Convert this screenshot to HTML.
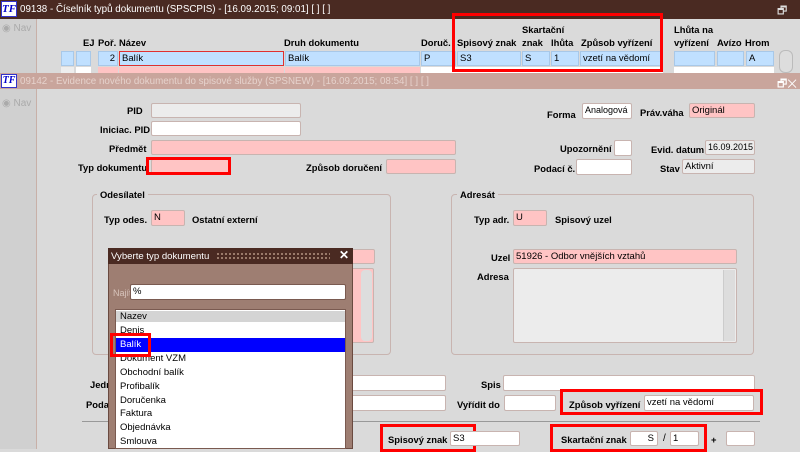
<!DOCTYPE html>
<html><head><meta charset="utf-8"><style>
*{margin:0;padding:0;box-sizing:border-box}
body{width:800px;height:449px;overflow:hidden;background:#dadada;font-family:"Liberation Sans",Arial,sans-serif;font-size:10px;color:#000;position:relative}
div,span{position:absolute}
.t{white-space:nowrap}
.b{font-weight:bold;font-size:9.4px}
.in{border:1px solid #c8b4b0;border-radius:2px;background:#fff;padding-left:2px;line-height:13px;white-space:nowrap;overflow:hidden;font-size:9.5px}
.pk{background:#ffc4c4}
.gr{background:#ececec}
.bl{background:#c0e0ff;border:1px solid #a8c8e8;padding-left:2px;line-height:13px;white-space:nowrap;font-size:9.5px}
.rb{border:3px solid #f00}
.fs{border:1px solid #c8b4b0;border-radius:4px}
</style></head><body>
<!-- top window -->
<div style="left:0;top:0;width:800px;height:19px;background:#4a2a22"></div>
<div style="left:1px;top:1px;width:16px;height:16px;background:#fff;border:1px solid #33c;color:#00c;font:bold italic 11px 'Liberation Serif';line-height:14px;text-align:center">TF</div>
<div class="t" style="left:20px;top:4px;color:#fff;font-size:9.8px">09138 - Číselník typů dokumentu (SPSCPIS) - [16.09.2015; 09:01] [ ] [ ]</div>
<div class="t" style="left:777px;top:2px;color:#ddd;font-size:11px">🗗</div>
<div style="left:0;top:19px;width:37px;height:54px;background:#d0d0d0;border-right:1px solid #c8b0a8"></div>
<div class="t" style="left:2px;top:23px;color:#aaa">◉ Nav</div>
<div class="t b" style="left:83px;top:37px">EJ</div>
<div class="t b" style="left:98px;top:37px">Poř.</div>
<div class="t b" style="left:119px;top:37px">Název</div>
<div class="t b" style="left:284px;top:37px">Druh dokumentu</div>
<div class="t b" style="left:421px;top:37px">Doruč.</div>
<div class="t b" style="left:457px;top:37px">Spisový znak</div>
<div class="t b" style="left:522px;top:24px">Skartační</div>
<div class="t b" style="left:522px;top:37px">znak</div>
<div class="t b" style="left:551px;top:37px">lhůta</div>
<div class="t b" style="left:581px;top:37px">Způsob vyřízení</div>
<div class="t b" style="left:674px;top:24px">Lhůta na</div>
<div class="t b" style="left:674px;top:37px">vyřízení</div>
<div class="t b" style="left:717px;top:37px">Avízo</div>
<div class="t b" style="left:745px;top:37px">Hrom</div>
<div class="bl" style="left:61px;top:51px;width:13px;height:15px"></div>
<div class="bl" style="left:76px;top:51px;width:15px;height:15px"></div>
<div class="bl" style="left:98px;top:51px;width:20px;height:15px;text-align:right;padding-right:2px">2</div>
<div class="bl" style="left:119px;top:51px;width:165px;height:15px;border-color:#e03030">Balík</div>
<div class="bl" style="left:285px;top:51px;width:135px;height:15px">Balík</div>
<div class="bl" style="left:421px;top:51px;width:35px;height:15px">P</div>
<div class="bl" style="left:457px;top:51px;width:64px;height:15px">S3</div>
<div class="bl" style="left:522px;top:51px;width:28px;height:15px">S</div>
<div class="bl" style="left:551px;top:51px;width:28px;height:15px">1</div>
<div class="bl" style="left:580px;top:51px;width:83px;height:15px">vzetí na vědomí</div>
<div class="bl" style="left:674px;top:51px;width:41px;height:15px"></div>
<div class="bl" style="left:717px;top:51px;width:27px;height:15px"></div>
<div class="bl" style="left:746px;top:51px;width:28px;height:15px">A</div>
<div style="left:779px;top:50px;width:14px;height:23px;background:#ddd;border:1px solid #bbb;border-radius:6px"></div>
<div style="left:61px;top:67px;width:13px;height:6px;background:#eee"></div>
<div style="left:76px;top:67px;width:15px;height:6px;background:#fff"></div>
<div class="pk" style="left:98px;top:67px;width:20px;height:6px"></div>
<div class="pk" style="left:119px;top:67px;width:165px;height:6px"></div>
<div class="pk" style="left:285px;top:67px;width:135px;height:6px"></div>
<div style="left:421px;top:67px;width:242px;height:6px;background:#fff"></div>
<div style="left:674px;top:67px;width:100px;height:6px;background:#fff"></div>
<div class="rb" style="left:452px;top:13px;width:211px;height:59px"></div>
<!-- second window -->
<div style="left:0;top:73px;width:800px;height:16px;background:#c9a59c"></div>
<div style="left:1px;top:74px;width:16px;height:14px;background:#fff;border:1px solid #33c;color:#00c;font:bold italic 10px 'Liberation Serif';line-height:12px;text-align:center">TF</div>
<div class="t" style="left:20px;top:76px;color:#e6d2cc;font-size:9.8px">09142 - Evidence nového dokumentu do spisové služby (SPSNEW) - [16.09.2015; 08:54] [ ] [ ]</div>
<div class="t" style="left:777px;top:75px;color:#fff;font-size:11px">🗗✕</div>
<div style="left:0;top:89px;width:37px;height:360px;background:#d0d0d0;border-right:1px solid #c8b0a8"></div>
<div class="t" style="left:2px;top:98px;color:#aaa">◉ Nav</div>
<!-- form -->
<div class="t b" style="left:127px;top:105px">PID</div>
<div class="in gr" style="left:151px;top:103px;width:150px;height:15px"></div>
<div class="t b" style="left:100px;top:124px">Iniciac. PID</div>
<div class="in" style="left:151px;top:121px;width:150px;height:15px"></div>
<div class="t b" style="left:109px;top:143px">Předmět</div>
<div class="in pk" style="left:151px;top:140px;width:305px;height:15px"></div>
<div class="t b" style="left:78px;top:162px">Typ dokumentu</div>
<div class="in pk" style="left:151px;top:159px;width:78px;height:15px"></div>
<div class="rb" style="left:146px;top:157px;width:85px;height:18px"></div>
<div class="t b" style="left:306px;top:162px">Způsob doručení</div>
<div class="in pk" style="left:386px;top:159px;width:70px;height:15px"></div>
<div class="t b" style="left:547px;top:109px">Forma</div>
<div class="in" style="left:582px;top:103px;width:50px;height:16px;font-size:9px">Analogová</div>
<div class="t b" style="left:640px;top:107px">Práv.váha</div>
<div class="in pk" style="left:689px;top:103px;width:66px;height:15px">Originál</div>
<div class="t b" style="left:560px;top:143px">Upozornění</div>
<div class="in" style="left:614px;top:140px;width:18px;height:16px"></div>
<div class="t b" style="left:651px;top:144px">Evid. datum</div>
<div class="in gr" style="left:705px;top:140px;width:50px;height:15px;font-size:9px">16.09.2015</div>
<div class="t b" style="left:534px;top:163px">Podací č.</div>
<div class="in" style="left:576px;top:159px;width:56px;height:16px"></div>
<div class="t b" style="left:660px;top:163px">Stav</div>
<div class="in gr" style="left:682px;top:159px;width:73px;height:15px">Aktivní</div>
<!-- fieldsets -->
<div class="fs" style="left:92px;top:194px;width:299px;height:161px"></div>
<div class="t b" style="left:97px;top:189px;background:#dadada;padding:0 3px">Odesílatel</div>
<div class="t b" style="left:104px;top:214px">Typ odes.</div>
<div class="in pk" style="left:151px;top:210px;width:34px;height:16px">N</div>
<div class="t b" style="left:192px;top:214px">Ostatní externí</div>
<div class="in pk" style="left:340px;top:249px;width:35px;height:15px"></div>
<div class="in pk" style="left:340px;top:268px;width:34px;height:75px"></div>
<div style="left:361px;top:270px;width:11px;height:71px;background:#ddd;border-radius:4px"></div>
<div class="fs" style="left:451px;top:194px;width:303px;height:161px"></div>
<div class="t b" style="left:457px;top:189px;background:#dadada;padding:0 3px">Adresát</div>
<div class="t b" style="left:474px;top:214px">Typ adr.</div>
<div class="in pk" style="left:513px;top:210px;width:34px;height:16px">U</div>
<div class="t b" style="left:555px;top:214px">Spisový uzel</div>
<div class="t b" style="left:491px;top:252px">Uzel</div>
<div class="in pk" style="left:513px;top:249px;width:224px;height:15px">51926 - Odbor vnějších vztahů</div>
<div class="t b" style="left:477px;top:271px">Adresa</div>
<div class="in gr" style="left:513px;top:268px;width:224px;height:75px"></div>
<div style="left:723px;top:270px;width:12px;height:71px;background:#ddd;border-left:1px solid #ccc"></div>
<!-- bottom -->
<div class="t b" style="left:90px;top:379px">Jedn</div>
<div class="in" style="left:340px;top:375px;width:106px;height:16px"></div>
<div class="t b" style="left:481px;top:379px">Spis</div>
<div class="in" style="left:503px;top:375px;width:252px;height:16px"></div>
<div class="t b" style="left:86px;top:399px">Poda</div>
<div class="in" style="left:340px;top:395px;width:106px;height:16px"></div>
<div class="t b" style="left:457px;top:399px">Vyřídit do</div>
<div class="in" style="left:504px;top:395px;width:52px;height:16px"></div>
<div class="rb" style="left:560px;top:389px;width:203px;height:26px"></div>
<div class="t b" style="left:569px;top:399px">Způsob vyřízení</div>
<div class="in" style="left:644px;top:395px;width:110px;height:16px">vzetí na vědomí</div>
<div style="left:82px;top:421px;width:678px;height:1px;background:#999"></div>
<div class="rb" style="left:380px;top:424px;width:96px;height:28px"></div>
<div class="t b" style="left:388px;top:434px">Spisový znak</div>
<div class="in" style="left:450px;top:431px;width:70px;height:15px">S3</div>
<div class="rb" style="left:550px;top:424px;width:157px;height:28px"></div>
<div class="t b" style="left:561px;top:434px">Skartační znak</div>
<div class="in" style="left:630px;top:431px;width:28px;height:15px;text-align:right;padding-right:3px">S</div>
<div class="t" style="left:663px;top:433px">/</div>
<div class="in" style="left:670px;top:431px;width:29px;height:15px">1</div>
<div class="t b" style="left:711px;top:434px">+</div>
<div class="in" style="left:726px;top:431px;width:29px;height:15px"></div>
<!-- dialog -->
<div style="left:108px;top:248px;width:245px;height:201px;background:#9e7e72;border:1px solid #6a4a40"></div>
<div style="left:108px;top:248px;width:245px;height:16px;background:#4a2a22"></div>
<div style="left:216px;top:252px;width:114px;height:7px;background-image:radial-gradient(#a08070 1px,transparent 1.2px);background-size:4px 4px"></div>
<div class="t" style="left:111px;top:251px;color:#fff;font-size:9.6px">Vyberte typ dokumentu</div>
<div class="t b" style="left:339px;top:248px;color:#fff;font-size:12px">✕</div>
<div class="t" style="left:113px;top:288px;color:#d8c4bc;font-size:9px">Najít</div>
<div class="in" style="left:130px;top:284px;width:216px;height:16px;border-color:#7a5a50">%</div>
<div style="left:115px;top:309px;width:231px;height:140px;background:#fff;border:1px solid #7a5a50;overflow:hidden;font-size:9.5px">
<div style="left:0;top:1px;width:229px;height:11px;background:#d4d4d4;padding-left:4px;line-height:11px">Nazev</div>
<div class="t" style="left:4px;top:15px">Denis</div>
<div style="left:0;top:28px;width:229px;height:14px;background:#0000ff;color:#fff;padding-left:4px;line-height:14px">Balík</div>
<div class="t" style="left:4px;top:43px">Dokument VZM</div>
<div class="t" style="left:4px;top:57px">Obchodní balík</div>
<div class="t" style="left:4px;top:71px">Profibalík</div>
<div class="t" style="left:4px;top:85px">Doručenka</div>
<div class="t" style="left:4px;top:98px">Faktura</div>
<div class="t" style="left:4px;top:112px">Objednávka</div>
<div class="t" style="left:4px;top:126px">Smlouva</div>
</div>
<div class="rb" style="left:110px;top:333px;width:41px;height:24px"></div>
</body></html>
